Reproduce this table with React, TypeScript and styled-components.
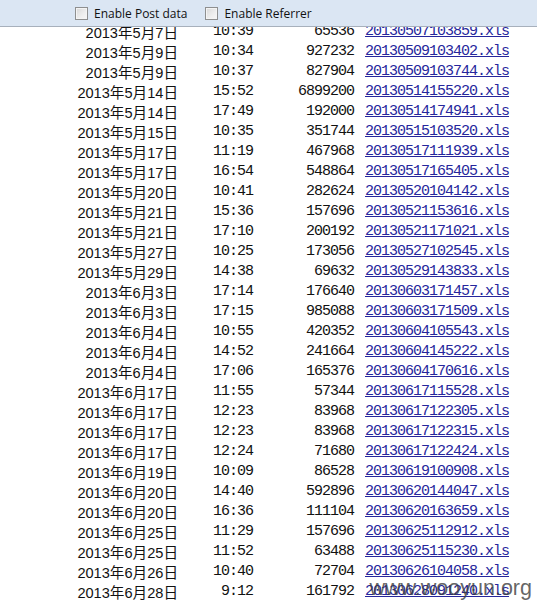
import React from "react";
import styled, { createGlobalStyle } from "styled-components";

const Global = createGlobalStyle`
  html, body { margin: 0; padding: 0; background: #ffffff; }
  body { overflow: hidden; }
`;

type Entry = { date: string; time: string; size: string; name: string };

const rows: [string, string, string, string][] = [
  ["2013年5月7日", "10:39", "65536", "20130507103859.xls"],
  ["2013年5月9日", "10:34", "927232", "20130509103402.xls"],
  ["2013年5月9日", "10:37", "827904", "20130509103744.xls"],
  ["2013年5月14日", "15:52", "6899200", "20130514155220.xls"],
  ["2013年5月14日", "17:49", "192000", "20130514174941.xls"],
  ["2013年5月15日", "10:35", "351744", "20130515103520.xls"],
  ["2013年5月17日", "11:19", "467968", "20130517111939.xls"],
  ["2013年5月17日", "16:54", "548864", "20130517165405.xls"],
  ["2013年5月20日", "10:41", "282624", "20130520104142.xls"],
  ["2013年5月21日", "15:36", "157696", "20130521153616.xls"],
  ["2013年5月21日", "17:10", "200192", "20130521171021.xls"],
  ["2013年5月27日", "10:25", "173056", "20130527102545.xls"],
  ["2013年5月29日", "14:38", "69632", "20130529143833.xls"],
  ["2013年6月3日", "17:14", "176640", "20130603171457.xls"],
  ["2013年6月3日", "17:15", "985088", "20130603171509.xls"],
  ["2013年6月4日", "10:55", "420352", "20130604105543.xls"],
  ["2013年6月4日", "14:52", "241664", "20130604145222.xls"],
  ["2013年6月4日", "17:06", "165376", "20130604170616.xls"],
  ["2013年6月17日", "11:55", "57344", "20130617115528.xls"],
  ["2013年6月17日", "12:23", "83968", "20130617122305.xls"],
  ["2013年6月17日", "12:23", "83968", "20130617122315.xls"],
  ["2013年6月17日", "12:24", "71680", "20130617122424.xls"],
  ["2013年6月19日", "10:09", "86528", "20130619100908.xls"],
  ["2013年6月20日", "14:40", "592896", "20130620144047.xls"],
  ["2013年6月20日", "16:36", "111104", "20130620163659.xls"],
  ["2013年6月25日", "11:29", "157696", "20130625112912.xls"],
  ["2013年6月25日", "11:52", "63488", "20130625115230.xls"],
  ["2013年6月26日", "10:40", "72704", "20130626104058.xls"],
  ["2013年6月28日", "9:12", "161792", "20130628091240.xls"],
];

const entries: Entry[] = rows.map(([date, time, size, name]) => ({ date, time, size, name }));

const Page = styled.div`
  position: relative;
  width: 537px;
  height: 602px;
  display: flex;
  flex-direction: column;
  overflow: hidden;
  background: #ffffff;
`;

const Toolbar = styled.div`
  flex: 0 0 26px;
  display: flex;
  align-items: center;
  gap: 18px;
  padding-left: 75px;
  background: #dbe6f3;
  border-bottom: 1px solid #a7b0bc;
  font-family: "Open Sans", "Noto Sans", sans-serif;
  font-size: 12px;
  color: #111;
`;

const CheckLabel = styled.label`
  display: flex;
  align-items: center;
  gap: 6px;
`;

const Box = styled.span`
  width: 11px;
  height: 11px;
  border: 1px solid #8e8f8f;
  background: linear-gradient(135deg, #d8d8d8 0%, #eeeeee 60%, #f7f7f7 100%);
  box-shadow: inset 0 0 0 1px #f4f4f4;
`;

const Viewport = styled.div`
  flex: 1;
  overflow: hidden;
`;

const List = styled.div`
  margin-top: -6px;
  display: grid;
  grid-template-columns: 178px 75px 101px auto;
  grid-auto-rows: 20px;
  align-items: center;
`;

const DateCell = styled.span`
  justify-self: end;
  font-family: "Liberation Sans", "Noto Sans CJK SC", sans-serif;
  font-size: 14.6px;
  color: #111;
  white-space: nowrap;
`;

const MonoCell = styled.span`
  justify-self: end;
  font-family: "Liberation Mono", "DejaVu Sans Mono", monospace;
  font-size: 15px;
  letter-spacing: -1px;
  color: #111;
  white-space: nowrap;
`;

const FileLink = styled.a`
  margin-left: 11px;
  font-family: "Liberation Mono", "DejaVu Sans Mono", monospace;
  font-size: 15px;
  letter-spacing: -1px;
  color: #26269c;
  text-decoration: underline;
  white-space: nowrap;
`;

const Watermark = styled.div`
  position: absolute;
  right: 5px;
  bottom: 3px;
  font-family: "Liberation Sans", Arial, sans-serif;
  font-size: 21.5px;
  line-height: 22px;
  color: rgba(60, 60, 60, 0.8);
  pointer-events: none;
`;

export default function App() {
  return (
    <Page>
      <Global />
      <Toolbar>
        <CheckLabel>
          <Box />
          Enable Post data
        </CheckLabel>
        <CheckLabel>
          <Box />
          Enable Referrer
        </CheckLabel>
      </Toolbar>
      <Viewport>
        <List>
          {entries.map((e, i) => (
            <React.Fragment key={i}>
              <DateCell>{e.date}</DateCell>
              <MonoCell>{e.time}</MonoCell>
              <MonoCell>{e.size}</MonoCell>
              <FileLink href="#">{e.name}</FileLink>
            </React.Fragment>
          ))}
        </List>
      </Viewport>
      <Watermark>www.wooyun.org</Watermark>
    </Page>
  );
}
